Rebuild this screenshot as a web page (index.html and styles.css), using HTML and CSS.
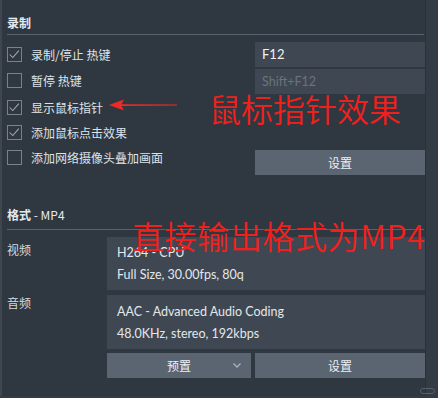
FILE: index.html
```html
<!DOCTYPE html>
<html lang="zh-CN">
<head>
<meta charset="utf-8">
<link rel="stylesheet" href="styles.css">
</head>
<body>
<div class="window">
  <div class="panel">
    <div class="sec-title first"><b>录制</b></div>
    <div class="rec">
      <div class="checks">
        <div class="row r1"><span class="cb on"><svg viewBox="0 0 15 15"><path d="M2 7.5 L5.5 11 L12.5 3"/></svg></span>录制/停止 热键</div>
        <div class="row r2"><span class="cb"></span>暂停 热键</div>
        <div class="row r3"><span class="cb on"><svg viewBox="0 0 15 15"><path d="M2 7.5 L5.5 11 L12.5 3"/></svg></span>显示鼠标指针</div>
        <div class="row r4"><span class="cb on"><svg viewBox="0 0 15 15"><path d="M2 7.5 L5.5 11 L12.5 3"/></svg></span>添加鼠标点击效果</div>
        <div class="row r5"><span class="cb"></span>添加网络摄像头叠加画面</div>
      </div>
      <div class="controls">
        <div class="input">F12</div>
        <div class="input ph">Shift+F12</div>
        <div class="btn set1">设置</div>
      </div>
    </div>
    <div class="sec-title second"><b>格式</b> - MP4</div>
    <div class="media">
      <div class="label">视频</div>
      <div class="box video">
        <div class="line">H264 - CPU</div>
        <div class="line">Full Size, 30.00fps, 80q</div>
      </div>
      <div class="label">音频</div>
      <div class="box audio">
        <div class="line">AAC - Advanced Audio Coding</div>
        <div class="line">48.0KHz, stereo, 192kbps</div>
      </div>
      <div></div>
      <div class="btns">
        <div class="btn preset"><span class="ptxt">预置</span><svg class="chev" viewBox="0 0 8 5"><path d="M0.5 0.5 L4 4 L7.5 0.5"/></svg></div>
        <div class="btn set2">设置</div>
      </div>
    </div>
  </div>
  <div class="side"></div>
</div>
<div class="grip"></div>
<svg class="arrow" width="80" height="16" viewBox="0 0 80 16"><polygon points="0,7 15,1.5 12.5,6.2 68,6.6 68,7.6 12.5,8 15,12.5"/></svg>
<div class="note n1">鼠标指针效果</div>
<div class="note n2">直接输出格式为MP4</div>
</body>
</html>
```

FILE: styles.css
```css
html, body {
  margin: 0;
  padding: 0;
}
body {
  width: 438px;
  height: 398px;
  overflow: hidden;
  position: relative;
  background: #333b45;
  font-family: "Noto Sans CJK SC", "Noto Sans", sans-serif;
  font-size: 12px;
  color: #dfe3e7;
}
.window {
  display: flex;
  height: 396px;
}
.panel {
  width: 426px;
  box-sizing: border-box;
  border-left: 2px solid #3f464e;
  border-right: 1px solid #2a313a;
  background: #2f3741;
  padding-left: 5px;
}
.side {
  flex: 1;
  background: #333b45;
}
.sec-title {
  width: 417px;
  height: 35px;
  box-sizing: border-box;
  border-bottom: 1px solid #59616a;
  line-height: 16px;
  color: #e6e9ec;
}
.sec-title b {
  font-weight: 700;
}
.sec-title.first {
  padding-top: 15px;
}
.sec-title.second {
  padding-top: 12px;
  margin-top: 20px;
}
.rec {
  display: grid;
  grid-template-columns: 248px 170px;
  margin-top: 7px;
}
.checks {
  display: flex;
  flex-direction: column;
}
.row {
  display: flex;
  align-items: center;
  gap: 9px;
}
.r1 { height: 25px; }
.r2 { height: 27px; }
.r3 { height: 26px; }
.r4 { height: 25px; }
.r5 { height: 25px; }
.cb {
  width: 15px;
  height: 15px;
  box-sizing: border-box;
  border: 1px solid #79818a;
  flex: none;
  display: flex;
}
.cb svg {
  width: 13px;
  height: 13px;
}
.cb svg path {
  fill: none;
  stroke: #a3aab2;
  stroke-width: 1.2;
}
.controls {
  display: flex;
  flex-direction: column;
}
.input {
  height: 25px;
  background: #3f4752;
  padding-left: 7px;
  line-height: 25px;
  font-family: "Lato", "Noto Sans CJK SC", sans-serif;
  font-size: 13px;
  color: #f0f2f4;
}
.input.ph {
  margin-top: 2px;
  color: #6b737c;
  font-size: 12.5px;
}
.btn {
  height: 25px;
  background: #5b6572;
  color: #eef0f2;
  display: flex;
  align-items: center;
  justify-content: center;
}
.set1 {
  margin-top: 56px;
}
.media {
  display: grid;
  grid-template-columns: 100px 318px;
  margin-top: 7px;
}
.label {
  padding-top: 2px;
  line-height: 22px;
  color: #d6dade;
}
.box {
  background: #3f4752;
  padding-left: 10px;
  box-sizing: border-box;
}
.line {
  line-height: 22px;
  color: #e4e7ea;
  font-family: "Lato", "Noto Sans CJK SC", sans-serif;
  font-size: 12.5px;
}
.video {
  padding-top: 5px;
  padding-bottom: 4px;
  height: 53px;
}
.audio {
  margin-top: 5px;
  padding-top: 6px;
  padding-bottom: 4px;
  height: 54px;
}
.btns {
  display: flex;
  gap: 4px;
  margin-top: 4px;
}
.preset {
  width: 144px;
  position: relative;
}
.set2 {
  flex: 1;
}
.chev {
  position: absolute;
  right: 10px;
  top: 10px;
  width: 8px;
  height: 5px;
}
.chev path {
  fill: none;
  stroke: #aab1b8;
  stroke-width: 1.3;
}
.grip {
  position: absolute;
  left: 420px;
  top: 388px;
  width: 15px;
  height: 6px;
  box-sizing: border-box;
  border: 1px solid #56606a;
  border-radius: 3px;
}
.arrow {
  position: absolute;
  left: 109px;
  top: 98px;
}
.arrow polygon {
  fill: #ee2a24;
}
.note {
  position: absolute;
  color: #f0211d;
  font-size: 32px;
  line-height: 32px;
  font-weight: 350;
  white-space: nowrap;
  font-family: "Noto Sans CJK SC", sans-serif;
}
.n1 {
  left: 209px;
  top: 92px;
}
.n2 {
  left: 132px;
  top: 219px;
  letter-spacing: 0.6px;
}
```
